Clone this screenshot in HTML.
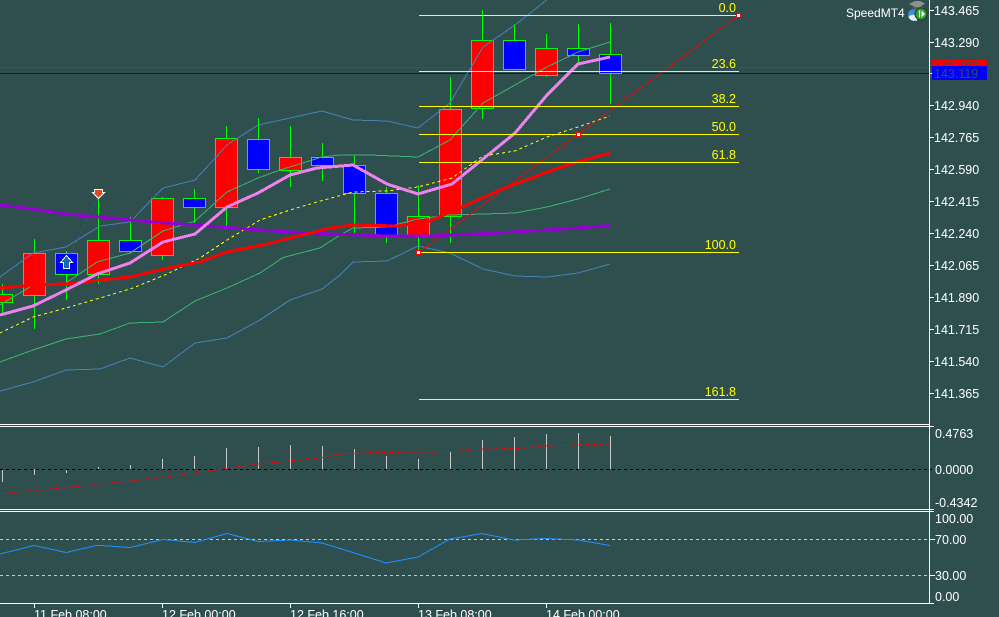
<!DOCTYPE html>
<html><head><meta charset="utf-8"><style>
html,body{margin:0;padding:0;background:#2f4f4f;width:999px;height:617px;overflow:hidden}
svg{display:block}
text{font-family:"Liberation Sans",sans-serif;font-size:12.5px;fill:#fff}
.f text{fill:#ff0;text-anchor:end}
</style></head><body>
<svg width="999" height="617" viewBox="0 0 999 617" xmlns="http://www.w3.org/2000/svg">
<rect width="999" height="617" fill="#2f4f4f"/>
<g shape-rendering="crispEdges">
<path d="M0 67.5H929" stroke="#f00"/>
<path d="M0 73.5H929" stroke="#00f"/>
<!-- wicks -->
<path stroke="#0f0" fill="none" d="M2.5 284V313M34.5 239V329M66.5 251V300M98.5 198V284M130.5 217V254M162.5 197V260M194.5 189V223M226.5 126V226M258.5 118V173M290.5 126V187M322.5 143V181M354.5 155V233M386.5 187V243M418.5 185V253M450.5 77V243M482.5 10V119M514.5 24V70M546.5 34V77M578.5 24V65M610.5 23V104"/>
<!-- bodies -->
<g stroke="#0f0" fill="#f00">
<rect x="-9.5" y="294.5" width="22" height="8"/>
<rect x="23.5" y="253.5" width="22" height="42"/>
<rect x="87.5" y="240.5" width="22" height="34"/>
<rect x="151.5" y="198.5" width="22" height="57"/>
<rect x="215.5" y="138.5" width="22" height="69"/>
<rect x="279.5" y="157.5" width="22" height="13"/>
<rect x="407.5" y="216.5" width="22" height="19"/>
<rect x="439.5" y="109.5" width="22" height="107"/>
<rect x="471.5" y="40.5" width="22" height="68"/>
<rect x="535.5" y="48.5" width="22" height="27"/>
</g>
<g stroke="#0f0" fill="#00f">
<rect x="55.5" y="253.5" width="22" height="21"/>
<rect x="119.5" y="240.5" width="22" height="11"/>
<rect x="183.5" y="198.5" width="22" height="9"/>
<rect x="247.5" y="139.5" width="22" height="30"/>
<rect x="311.5" y="157.5" width="22" height="8"/>
<rect x="343.5" y="165.5" width="22" height="28"/>
<rect x="375.5" y="193.5" width="22" height="42"/>
<rect x="503.5" y="40.5" width="22" height="29"/>
<rect x="567.5" y="48.5" width="22" height="7"/>
<rect x="599.5" y="54.5" width="22" height="19"/>
</g>
<!-- indicators -->
<g fill="none">
<polyline stroke="#4682b4" points="0,277 33,253 66,247 100,226 130,222 163,188 195,180 227,145 258,125 290,118 322,111 353,120 387,121 418,128 450,103 483,47 515,25 548,-1"/>
<polyline stroke="#4682b4" points="0,391 33,382 66,370 100,369 130,358 163,367 195,343 227,338 260,320 290,300 322,289 340,275 353,262 387,261 418,246 450,253 483,269 515,276 547,277 578,273 610,264"/>
<polyline stroke="#3cb371" points="0,305 33,285 66,283 97,262 130,253 163,231 195,221 227,192 258,178 280,170 322,157 340,155 370,155 418,157 450,140 483,103 515,85 547,67 578,52 610,42"/>
<polyline stroke="#3cb371" points="0,362 33,350 66,339 100,334 130,323 163,322 195,301 227,288 260,273 283,257.5 320,248 340,235 353,228 387,227 418,219 450,215 483,214 515,213 547,207 578,199 610,189"/>
<polyline stroke="#ff0" stroke-dasharray="3 3" points="0,333 33,317 66,308 100,298 133,288 167,274 200,258 227,240 260,220 290,210 317,202 353,192 387,191 418,187 452,178 483,156 515,151 547,137 578,127 610,116"/>
<polyline stroke="#f00" stroke-dasharray="5 1" points="418.5,252.5 738.5,15.5"/>
<polyline stroke="#1f5f9f" stroke-dasharray="3 3" points="98,198 66,262"/>
<polyline stroke="#9400d3" stroke-width="3" points="0,205 33,209 66,214 100,217 153,222 207,226 273,231 330,234 387,236 430,236 497,233 563,229 610,225.5"/>
<polyline stroke="#f00" stroke-width="3" points="0,288 33,285 66,284 100,280 130,277 166,268.5 200,262 227,252 267,244 300,235.5 330,228 353,225 397,226 430,221 460,208 500,190 547,172 577,162 610,153"/>
<polyline stroke="#ee82ee" stroke-width="3" points="0,315 33,306 66,290 97,274 130,263 163,242 195,234 227,207 258,193 290,175 317,168 353,165 387,184 418,194 452,184 483,159 515,133 547,95 578,64 610,57"/>
</g>
<!-- fibo lines -->
<path stroke="#ff0" d="M419 15.5H739M419 71.5H739M419 106.5H739M419 134.5H739M419 162.5H739M419 252.5H739M419 399.5H739"/>
<g fill="#fff" stroke="#f00">
<rect x="416.5" y="250.5" width="4" height="4"/>
<rect x="576.5" y="132.5" width="4" height="4"/>
<rect x="736.5" y="13.5" width="4" height="4"/>
</g>
<!-- frame -->
<path stroke="#fff" fill="none" d="M929.5 0V603.5H0M0 424.5H929M0 426.5H929M0 509.5H929M0 511.5H929"/>
<path stroke="#fff" d="M930 10.5H934M930 42.5H934M930 73.5H934M930 105.5H934M930 137.5H934M930 169.5H934M930 201.5H934M930 233.5H934M930 265.5H934M930 297.5H934M930 329.5H934M930 361.5H934M930 393.5H934M930 426.5H934M930 509.5H934M930 511.5H934M930 539.5H935M930 575.5H935M930 603.5H934M34.5 604V608M162.5 604V608M290.5 604V608M418.5 604V608M546.5 604V608"/>
<!-- oscillators -->
<path stroke="#c8c8c8" d="M2.5 469V482M34.5 469V475M66.5 469V473M98.5 467V469M130.5 465V469M162.5 459V469M194.5 456V469M226.5 448V469M258.5 447V469M290.5 445V469M322.5 446V469M354.5 449V469M386.5 456V469M418.5 459V469M450.5 452V469M482.5 440V469M514.5 437V469M546.5 434V469M578.5 433V469M610.5 436V469"/>
<path stroke="#000" stroke-dasharray="3 3" d="M0 469.5H932"/>
<polyline fill="none" stroke="#f00" stroke-dasharray="4 3" points="0,493.5 33,490.7 66,487.7 100,484 130,481 166,476.7 200,472 230,468 258,464 290,461 322,457.5 340,454 372,452.5 430,452 457,451.3 483,449 515,448.6 547,446 578,445 610,444"/>
<path stroke="#c8c8c8" stroke-dasharray="3 3" d="M0 539.5H929M0 575.5H929"/>
<polyline fill="none" stroke="#1e90ff" points="0,554 34,545.5 66,552.5 97,545.3 130,547.5 163,539.5 195,542.5 227,533.5 258,541.5 290,540 322,543 340,548.5 386,563 418,557 450,539 482,533.5 514,540 546,538.5 578,540 610,545.5"/>
<!-- price boxes -->
<rect x="932" y="60" width="55" height="6" fill="#f00"/>
</g>
<text x="934" y="71" style="fill:#2f4f4f">143.158</text>
<rect x="932" y="66" width="55" height="14" fill="#00f" shape-rendering="crispEdges"/>
<text x="934" y="78" style="fill:#2f4f4f">143.119</text>
<!-- arrows -->
<path d="M94.5 189.5H102.5V192.5H104.5L98.5 198.5L92.5 192.5H94.5Z" fill="#e04a1e" stroke="#fff" shape-rendering="crispEdges"/>
<path d="M63.5 268.5V262.5H60.5L66.5 255.5L72.5 262.5H69.5V268.5Z" fill="#0f6fa8" stroke="#fff" shape-rendering="crispEdges"/>
<!-- fibo labels -->
<g class="f">
<text x="736" y="12">0.0</text>
<text x="736" y="68">23.6</text>
<text x="736" y="103">38.2</text>
<text x="736" y="131">50.0</text>
<text x="736" y="159">61.8</text>
<text x="736" y="249">100.0</text>
<text x="736" y="396">161.8</text>
</g>
<!-- axis labels -->
<g>
<text x="934" y="15">143.465</text>
<text x="934" y="47">143.290</text>
<text x="934" y="110">142.940</text>
<text x="934" y="142">142.765</text>
<text x="934" y="174">142.590</text>
<text x="934" y="206">142.415</text>
<text x="934" y="238">142.240</text>
<text x="934" y="270">142.065</text>
<text x="934" y="302">141.890</text>
<text x="934" y="334">141.715</text>
<text x="934" y="366">141.540</text>
<text x="934" y="398">141.365</text>
<text x="935" y="438">0.4763</text>
<text x="935" y="474">0.0000</text>
<text x="935" y="507">-0.4342</text>
<text x="935" y="523">100.00</text>
<text x="935" y="544">70.00</text>
<text x="935" y="580">30.00</text>
<text x="935" y="601">0.00</text>
<text x="34" y="619">11 Feb 08:00</text>
<text x="162" y="619">12 Feb 00:00</text>
<text x="290" y="619">12 Feb 16:00</text>
<text x="418" y="619">13 Feb 08:00</text>
<text x="546" y="619">14 Feb 00:00</text>
<text x="846" y="17" style="font-size:12px">SpeedMT4</text>
</g>
<!-- icon -->
<circle cx="914" cy="15" r="6" fill="#3f8fdc"/>
<path d="M908.5 17C911 14 915 14 918 17L917 20.5C914 21.5 910 20.5 908.5 17Z" fill="#e6eef6"/>
<path d="M915 1H920L925 3.5L920 7H915L909 4Z" fill="#8f8f8f"/>
<path d="M913 6L915 7H920L923 6V10H913Z" fill="#5c5c5c"/>
<circle cx="921" cy="14" r="6.5" fill="#20362f"/>
<circle cx="921" cy="14" r="5.5" fill="#2f9e2f"/>
<path d="M921.5 10.5V17.5L925 14Z" fill="#fff"/>
<path d="M919.5 10.5V17.5" stroke="#e8f8e8" stroke-width="1.2"/>
</svg>
</body></html>
